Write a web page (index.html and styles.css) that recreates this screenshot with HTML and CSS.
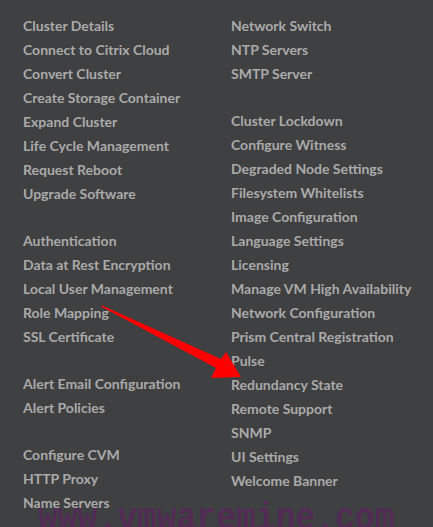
FILE: index.html
```html
<!DOCTYPE html>
<html>
<head>
<meta charset="utf-8">
<link rel="stylesheet" href="styles.css">
</head>
<body>
<div class="page">
  <div class="col">
    <ul class="group">
      <li>Cluster Details</li>
      <li>Connect to Citrix Cloud</li>
      <li>Convert Cluster</li>
      <li>Create Storage Container</li>
      <li>Expand Cluster</li>
      <li>Life Cycle Management</li>
      <li>Request Reboot</li>
      <li>Upgrade Software</li>
    </ul>
    <ul class="group">
      <li>Authentication</li>
      <li>Data at Rest Encryption</li>
      <li>Local User Management</li>
      <li>Role Mapping</li>
      <li>SSL Certificate</li>
    </ul>
    <ul class="group">
      <li>Alert Email Configuration</li>
      <li>Alert Policies</li>
    </ul>
    <ul class="group">
      <li>Configure CVM</li>
      <li>HTTP Proxy</li>
      <li>Name Servers</li>
    </ul>
  </div>
  <div class="col">
    <ul class="group">
      <li>Network Switch</li>
      <li>NTP Servers</li>
      <li>SMTP Server</li>
    </ul>
    <ul class="group">
      <li>Cluster Lockdown</li>
      <li>Configure Witness</li>
      <li>Degraded Node Settings</li>
      <li>Filesystem Whitelists</li>
      <li>Image Configuration</li>
      <li>Language Settings</li>
      <li>Licensing</li>
      <li>Manage VM High Availability</li>
      <li>Network Configuration</li>
      <li>Prism Central Registration</li>
      <li>Pulse</li>
      <li>Redundancy State</li>
      <li>Remote Support</li>
      <li>SNMP</li>
      <li>UI Settings</li>
      <li>Welcome Banner</li>
    </ul>
  </div>
  <svg class="arrow" width="433" height="527" viewBox="0 0 433 527">
    <polygon points="101,305 221,359 226,352 241,377 211,378 216,368 102,307" fill="#ff0000"/>
  </svg>
  <div class="watermark">www.vmwaremine.com</div>
</div>
</body>
</html>
```
FILE: styles.css
```css
html, body {
  margin: 0;
  padding: 0;
  background: #3f4042;
}
.page {
  position: relative;
  width: 433px;
  height: 527px;
  overflow: hidden;
  display: grid;
  grid-template-columns: 208px 1fr;
  padding: 14px 0 0 23px;
  box-sizing: border-box;
  font-family: Lato, "Noto Sans", sans-serif;
  font-weight: 700;
  font-size: 14px;
  color: #aaaaaa;
}
.col {
  display: flex;
  flex-direction: column;
  gap: 23px;
}
.group {
  list-style: none;
  margin: 0;
  padding: 0;
}
.group li {
  line-height: 24px;
  height: 24px;
  white-space: nowrap;
}
.arrow {
  position: absolute;
  left: 0;
  top: 0;
}
.watermark {
  position: absolute;
  left: 38px;
  top: 499px;
  font-family: "Liberation Mono", "Courier New", monospace;
  font-size: 33px;
  line-height: 36px;
  color: #562a58;
  opacity: 0.9;
  white-space: nowrap;
  transform: scaleY(1.15);
  transform-origin: top left;
}
```
